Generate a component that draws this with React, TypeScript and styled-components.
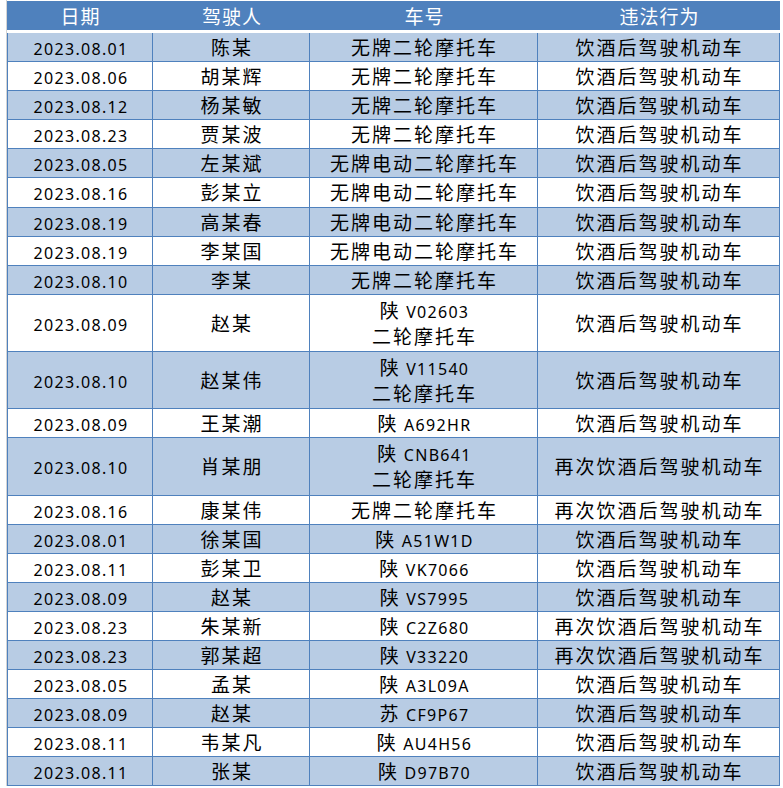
import React from 'react';
import styled, { createGlobalStyle } from 'styled-components';

const GlobalStyle = createGlobalStyle`
  html, body {
    margin: 0;
    padding: 0;
    background: #ffffff;
  }
`;

const Page = styled.div`
  padding-top: 1px;
  border-left: 1px solid #d4d4d4;
  margin-left: 6px;
  width: 776px;
`;

const Table = styled.table`
  border-collapse: separate;
  border-spacing: 0;
  width: 773px;
  table-layout: fixed;
  font-family: "Noto Sans CJK SC", "Noto Sans", sans-serif;
  color: #000;
`;

const HeadCell = styled.th`
  background: #4f81bd;
  color: #ffffff;
  font-weight: 400;
  font-size: 19px;
  letter-spacing: 1px;
  height: 29px;
  padding: 0 0 0 1px;
  line-height: 29px;
  border-bottom: 3px solid #ffffff;
  text-align: center;
`;

const Row = styled.tr<{ $shade: boolean }>`
  background: ${({ $shade }) => ($shade ? '#b8cce4' : '#ffffff')};
`;

const Cell = styled.td<{ $tall?: boolean }>`
  border-right: 1px solid #4f81bd;
  border-bottom: 1px solid #4f81bd;
  text-align: center;
  vertical-align: middle;
  font-size: 19px;
  letter-spacing: 2px;
  line-height: 26.1px;
  padding: ${({ $tall }) => ($tall ? '2px 0 2px 2px' : '1px 0 1px 2px')};
  white-space: nowrap;

  &:first-child {
    border-left: 1px solid #4f81bd;
  }
`;

const Latin = styled.span`
  font-family: "Noto Sans", sans-serif;
  font-size: 16px;
  line-height: 1;
  letter-spacing: 1.3px;
`;

type Record = {
  date: string;
  name: string;
  prov?: string;
  plate?: string;
  kind?: string;
  act: string;
};

const normal = '饮酒后驾驶机动车';
const again = '再次饮酒后驾驶机动车';
const moto = '无牌二轮摩托车';
const emoto = '无牌电动二轮摩托车';

const records: Record[] = [
  { date: '2023.08.01', name: '陈某', kind: moto, act: normal },
  { date: '2023.08.06', name: '胡某辉', kind: moto, act: normal },
  { date: '2023.08.12', name: '杨某敏', kind: moto, act: normal },
  { date: '2023.08.23', name: '贾某波', kind: moto, act: normal },
  { date: '2023.08.05', name: '左某斌', kind: emoto, act: normal },
  { date: '2023.08.16', name: '彭某立', kind: emoto, act: normal },
  { date: '2023.08.19', name: '高某春', kind: emoto, act: normal },
  { date: '2023.08.19', name: '李某国', kind: emoto, act: normal },
  { date: '2023.08.10', name: '李某', kind: moto, act: normal },
  { date: '2023.08.09', name: '赵某', prov: '陕', plate: 'V02603', kind: '二轮摩托车', act: normal },
  { date: '2023.08.10', name: '赵某伟', prov: '陕', plate: 'V11540', kind: '二轮摩托车', act: normal },
  { date: '2023.08.09', name: '王某潮', prov: '陕', plate: 'A692HR', act: normal },
  { date: '2023.08.10', name: '肖某朋', prov: '陕', plate: 'CNB641', kind: '二轮摩托车', act: again },
  { date: '2023.08.16', name: '康某伟', kind: moto, act: again },
  { date: '2023.08.01', name: '徐某国', prov: '陕', plate: 'A51W1D', act: normal },
  { date: '2023.08.11', name: '彭某卫', prov: '陕', plate: 'VK7066', act: normal },
  { date: '2023.08.09', name: '赵某', prov: '陕', plate: 'VS7995', act: normal },
  { date: '2023.08.23', name: '朱某新', prov: '陕', plate: 'C2Z680', act: again },
  { date: '2023.08.23', name: '郭某超', prov: '陕', plate: 'V33220', act: again },
  { date: '2023.08.05', name: '孟某', prov: '陕', plate: 'A3L09A', act: normal },
  { date: '2023.08.09', name: '赵某', prov: '苏', plate: 'CF9P67', act: normal },
  { date: '2023.08.11', name: '韦某凡', prov: '陕', plate: 'AU4H56', act: normal },
  { date: '2023.08.11', name: '张某', prov: '陕', plate: 'D97B70', act: normal },
];

export default function App() {
  return (
    <>
      <GlobalStyle />
      <Page>
        <Table>
          <colgroup>
            <col style={{ width: 146 }} />
            <col style={{ width: 157 }} />
            <col style={{ width: 228 }} />
            <col style={{ width: 242 }} />
          </colgroup>
          <thead>
            <tr>
              <HeadCell>日期</HeadCell>
              <HeadCell>驾驶人</HeadCell>
              <HeadCell>车号</HeadCell>
              <HeadCell>违法行为</HeadCell>
            </tr>
          </thead>
          <tbody>
            {records.map((r, i) => {
              const tall = !!(r.plate && r.kind);
              return (
                <Row key={i} $shade={i % 2 === 0}>
                  <Cell $tall={tall}>
                    <Latin>{r.date}</Latin>
                  </Cell>
                  <Cell $tall={tall}>{r.name}</Cell>
                  <Cell $tall={tall}>
                    {r.plate ? (
                      <>
                        {r.prov}
                        <Latin> {r.plate}</Latin>
                        {r.kind && (
                          <>
                            <br />
                            {r.kind}
                          </>
                        )}
                      </>
                    ) : (
                      r.kind
                    )}
                  </Cell>
                  <Cell $tall={tall}>{r.act}</Cell>
                </Row>
              );
            })}
          </tbody>
        </Table>
      </Page>
    </>
  );
}
